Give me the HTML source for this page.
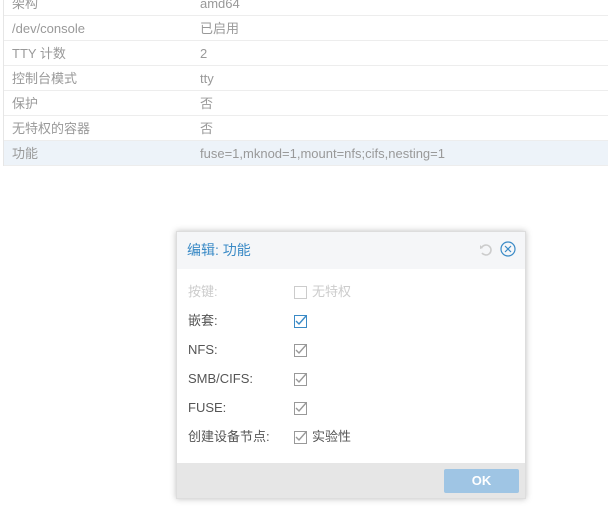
<!DOCTYPE html><html><head><meta charset="utf-8"><style>
body{margin:0;width:608px;height:514px;background:#fff;font-family:"Liberation Sans","Noto Sans CJK SC",sans-serif;font-size:13px;position:relative;overflow:hidden}
span{line-height:16px}
.c{margin-top:-1px}
.row{position:absolute;left:3px;width:605px;height:24px;border-bottom:1px solid #ededed;color:#999}
.row span{position:absolute;top:5px}
.row .k{left:9px}.row .v{left:197px}
.dlg{position:absolute;left:176px;top:231px;width:350px;height:268px;background:#fff;box-shadow:0 0 6px rgba(0,0,0,.25);border:1px solid #ddd;box-sizing:border-box}
.hd{position:absolute;left:0;top:0;right:0;height:37px;background:#f5f6f8}
.hd .t{position:absolute;left:10px;top:10px;font-size:14px;color:#3a8ac6}
.ft{position:absolute;left:0;right:0;top:231px;bottom:0;background:#e6e6e6}
.ok{position:absolute;left:267px;top:6px;width:75px;height:24px;background:#9fc5e4;color:#fff;font-weight:bold;text-align:center;line-height:24px;border-radius:2px}
.l{position:absolute;left:11px;color:#555}
.cb{position:absolute;left:117px;width:11px;height:11px;border:1px solid #999}
.cb svg{position:absolute;left:0;top:-1px}
</style></head><body>
<div class="row" style="top:-9px"><span class="k">架构</span><span class="v">amd64</span></div>
<div class="row" style="top:16px"><span class="k">/dev/console</span><span class="v">已启用</span></div>
<div class="row" style="top:41px"><span class="k">TTY 计数</span><span class="v">2</span></div>
<div class="row" style="top:66px"><span class="k">控制台模式</span><span class="v">tty</span></div>
<div class="row" style="top:91px"><span class="k">保护</span><span class="v">否</span></div>
<div class="row" style="top:116px"><span class="k">无特权的容器</span><span class="v">否</span></div>
<div class="row" style="top:141px;background:#edf3f9"><span class="k">功能</span><span class="v">fuse=1,mknod=1,mount=nfs;cifs,nesting=1</span></div>
<div style="position:absolute;left:3px;top:0;width:1px;height:166px;background:#e6e6e6"></div>
<div class="dlg">
<div class="hd"><span class="t">编辑: 功能</span>
<svg style="position:absolute;left:302px;top:11px" width="14" height="14" viewBox="0 0 14 14"><path d="M3 4A5 5 0 1 1 3 10" fill="none" stroke="#ccc" stroke-width="1.6"/><path d="M1 2L4 5 1 6Z" fill="#ccc"/></svg>
<svg style="position:absolute;left:323px;top:9px" width="16" height="16" viewBox="0 0 16 16"><circle cx="8" cy="8" r="7" fill="none" stroke="#3a8ac6" stroke-width="1.2"/><path d="M5 5L11 11M11 5L5 11" stroke="#3a8ac6" stroke-width="1.2"/></svg>
</div>
<span class="l" style="top:52px;color:#ccc">按键:</span><div class="cb" style="top:54px;border-color:#ccc"></div><span class="l" style="left:135px;top:52px;color:#ccc">无特权</span>
<span class="l" style="top:81px">嵌套:</span><div class="cb" style="top:83px;border-color:#3a8ac6"><svg width="13" height="12" viewBox="0 0 13 12"><path d="M1 6L4 9 11 1" fill="none" stroke="#3a8ac6" stroke-width="1.4"/></svg></div>
<span class="l" style="top:110px">NFS:</span><div class="cb" style="top:112px"><svg width="13" height="12" viewBox="0 0 13 12"><path d="M1 6L4 9 11 1" fill="none" stroke="#999" stroke-width="1.4"/></svg></div>
<span class="l" style="top:139px">SMB/CIFS:</span><div class="cb" style="top:141px"><svg width="13" height="12" viewBox="0 0 13 12"><path d="M1 6L4 9 11 1" fill="none" stroke="#999" stroke-width="1.4"/></svg></div>
<span class="l" style="top:168px">FUSE:</span><div class="cb" style="top:170px"><svg width="13" height="12" viewBox="0 0 13 12"><path d="M1 6L4 9 11 1" fill="none" stroke="#999" stroke-width="1.4"/></svg></div>
<span class="l" style="top:197px">创建设备节点:</span><div class="cb" style="top:199px"><svg width="13" height="12" viewBox="0 0 13 12"><path d="M1 6L4 9 11 1" fill="none" stroke="#999" stroke-width="1.4"/></svg></div><span class="l" style="left:135px;top:197px">实验性</span>
<div class="ft"><div class="ok">OK</div></div>
</div>
</body></html>
